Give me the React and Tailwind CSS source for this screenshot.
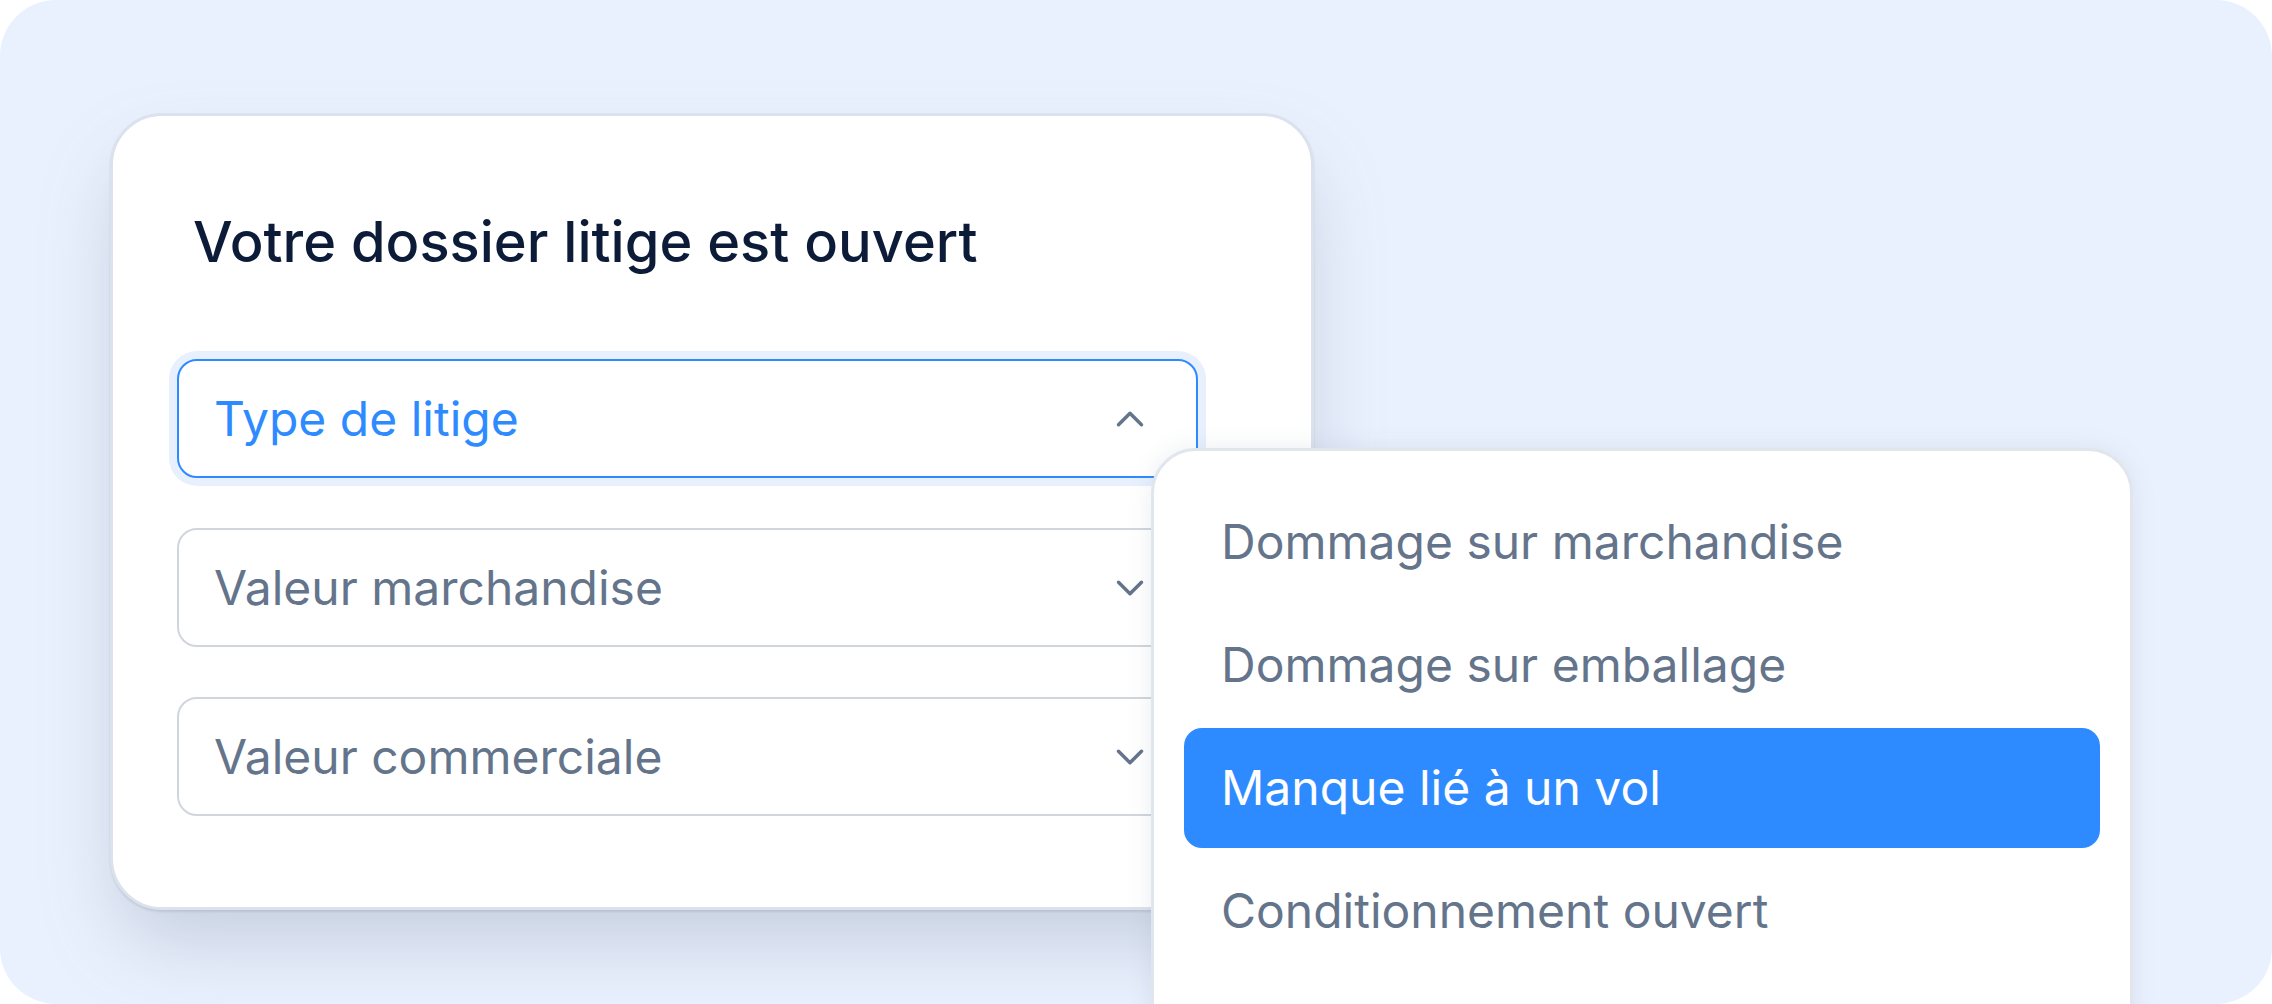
import { ChevronUp, ChevronDown } from "lucide-react";

function Select({ label, open }) {
  return (
    <div
      className={
        open
          ? "h-[119px] w-[1021px] rounded-[20px] border-2 border-[#2e8bff] bg-white shadow-[0_0_0_8px_#e8f0fe] flex items-center justify-between pl-[35px] pr-[43px]"
          : "h-[119px] w-[1021px] rounded-[20px] border-2 border-[#d1d5dc] bg-white flex items-center justify-between pl-[35px] pr-[43px]"
      }
    >
      <span
        className={
          open
            ? "text-[48px] leading-none text-[#2e8bff]"
            : "text-[48px] leading-none text-[#64748b]"
        }
      >
        {label}
      </span>
      {open ? (
        <ChevronUp size={46} strokeWidth={1.8} color="#64748b" />
      ) : (
        <ChevronDown size={46} strokeWidth={1.8} color="#64748b" />
      )}
    </div>
  );
}

const items = [
  "Dommage sur marchandise",
  "Dommage sur emballage",
  "Manque lié à un vol",
  "Conditionnement ouvert",
];

export default function App() {
  return (
    <div className="w-[2272px] h-[1004px] bg-white font-['Inter',sans-serif]">
      <div className="relative w-full h-full rounded-[56px] bg-[#eaf1fe] overflow-hidden">
        <div className="pl-[110px] pt-[113px]">
          <div className="w-[1204px] h-[797px] bg-white border-[3px] border-[#dbe2ec] rounded-[52px] shadow-[0_2px_2px_rgba(100,116,139,0.18),0_40px_80px_-10px_rgba(100,116,139,0.28)]">
            <h1 className="pl-[80px] pt-[98px] text-[56px] leading-none font-medium text-[#0c1b37]">
              Votre dossier litige est ouvert
            </h1>
            <div className="ml-[64px] mt-[89px] flex flex-col gap-[50px]">
              <Select label="Type de litige" open />
              <Select label="Valeur marchandise" />
              <Select label="Valeur commerciale" />
            </div>
          </div>
        </div>

        <div className="absolute left-[1151px] top-[448px] w-[982px] h-[640px] bg-white border-[3px] border-[#e1e6ed] rounded-[45px] shadow-[0_0_24px_rgba(100,116,139,0.12)] pt-[31px] px-[30px] flex flex-col gap-[3px]">
          {items.map((it, i) => (
            <div
              key={it}
              className={
                i === 2
                  ? "h-[120px] shrink-0 rounded-[18px] bg-[#2e8bff] text-white flex items-center pl-[37px] text-[48px] leading-none"
                  : "h-[120px] shrink-0 rounded-[18px] text-[#64748b] flex items-center pl-[37px] text-[48px] leading-none"
              }
            >
              {it}
            </div>
          ))}
        </div>
      </div>
    </div>
  );
}
